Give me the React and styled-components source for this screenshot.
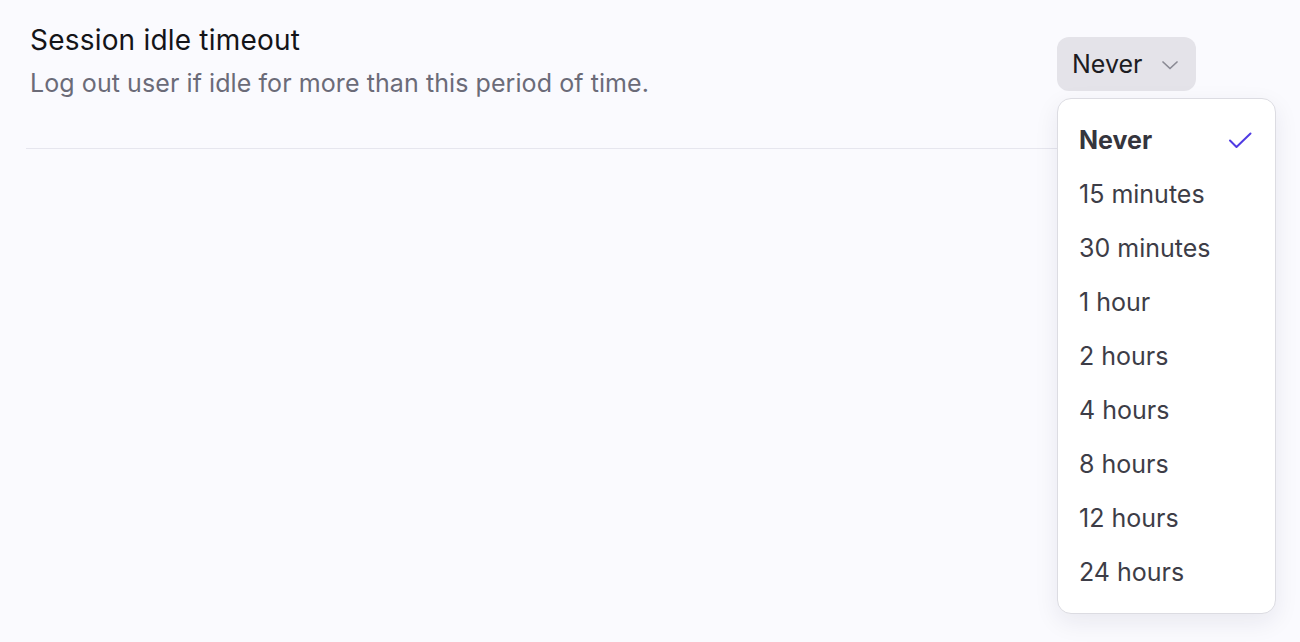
import React from 'react'
import styled, { createGlobalStyle } from 'styled-components'

const GlobalStyle = createGlobalStyle`
    html, body {
        margin: 0;
        padding: 0;
        background: #fafafe;
        font-family: Inter, "Noto Sans", sans-serif;
        -webkit-font-smoothing: antialiased;
    }
`;

const options = ['Never', '15 minutes', '30 minutes', '1 hour', '2 hours', '4 hours', '8 hours', '12 hours', '24 hours']

const App = () => {
    const selected = 'Never'
    return (
        <>
            <GlobalStyle />
            <Page>
                <Row>
                    <Text>
                        <Title>Session idle timeout</Title>
                        <Description>Log out user if idle for more than this period of time.</Description>
                    </Text>
                    <Control>
                        <SelectButton>
                            Never
                            <svg width="18" height="10" viewBox="0 0 18 10" fill="none">
                                <path d="M2 2l7 6.5L16 2" stroke="#8a8a94" strokeWidth="1.7" strokeLinecap="round" strokeLinejoin="round" />
                            </svg>
                        </SelectButton>
                        <Menu>
                            {options.map((o) => (
                                <Item key={o} active={o === selected}>
                                    {o}
                                    {o === selected && (
                                        <svg width="24" height="17" viewBox="0 0 24 17" fill="none">
                                            <path d="M2 8.5l6.5 6.5L22.5 1.5" stroke="#4f3be3" strokeWidth="2" strokeLinecap="round" strokeLinejoin="round" />
                                        </svg>
                                    )}
                                </Item>
                            ))}
                        </Menu>
                    </Control>
                </Row>
            </Page>
        </>
    )
}

const Page = styled.div`
    padding: 0 26px 0 26px;
    min-height: 642px;
    box-sizing: border-box;
`;
const Row = styled.div`
    display: flex;
    justify-content: space-between;
    align-items: flex-start;
    padding: 23px 0 50px 4px;
    border-bottom: 1px solid #e6e6ee;
`;
const Text = styled.div`
    display: flex;
    flex-direction: column;
    gap: 11px;
`;
const Title = styled.div`
    font-size: 28px;
    line-height: 34px;
    color: #141418;
    letter-spacing: 0.2px;
`;
const Description = styled.div`
    font-size: 25px;
    line-height: 30px;
    color: #6b6b78;
    letter-spacing: 0.08px;
`;
const Control = styled.div`
    position: relative;
    width: 219px;
    margin-top: 14px;
    margin-right: -2px;
`;
const SelectButton = styled.div`
    display: inline-flex;
    align-items: center;
    gap: 19px;
    height: 54px;
    box-sizing: border-box;
    padding: 0 17px 0 15px;
    border-radius: 12px;
    background: #e4e3e9;
    font-size: 25px;
    color: #1c1c22;
    svg {
        margin-top: 1px;
    }
`;
const Menu = styled.div`
    position: absolute;
    top: 61px;
    left: 0;
    width: 219px;
    box-sizing: border-box;
    padding: 14px 0;
    background: #ffffff;
    border: 1px solid #dcdce2;
    border-radius: 14px;
    box-shadow: 0 8px 24px rgba(30, 30, 60, 0.08);
`;
const Item = styled.div`
    display: flex;
    align-items: center;
    justify-content: space-between;
    height: 54px;
    padding: 0 23px 0 21px;
    font-size: 25px;
    font-weight: ${(p) => (p.active ? 700 : 400)};
    color: ${(p) => (p.active ? '#35353d' : '#3d3d47')};
`;

export default App
